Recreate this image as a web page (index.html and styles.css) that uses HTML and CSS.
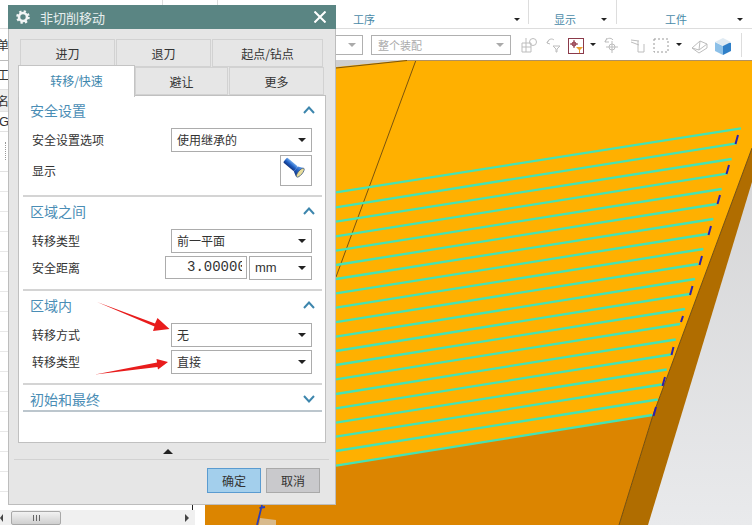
FILE: index.html
```html
<!DOCTYPE html>
<html lang="zh-CN">
<head>
    <meta charset="UTF-8">
    <title>非切削移动</title>
    <link rel="stylesheet" href="styles.css">
</head>
<body>
<div class="app">

    <div class="ribbon">
        <div class="group g1"></div>
        <div class="group g2"></div>
        <div class="group g3"><span class="group-name">工序</span><i class="caret"></i></div>
        <div class="group g4"><span class="group-name">显示</span><i class="caret"></i></div>
        <div class="group g5"><span class="group-name">工件</span><i class="caret"></i></div>
    </div>

    <div class="toolbar">
        <div class="crumb">单(</div>
        <div class="combo combo-a"><i class="caret caret-grey"></i></div>
        <div class="combo combo-b"><span>整个装配</span><i class="caret caret-grey"></i></div>
        <svg class="tool-icons" width="230" height="24" viewBox="515 33 230 24">
            <!-- grey icons -->
            <g fill="none" stroke="#bdbdbd">
                <path d="M522 43h9v9h-9zM526 38v14M522 47h9"/>
                <circle cx="533" cy="42" r="3.500"/>
                <path d="M547 43c1-4 5-5 7-3M549 40l-2 3 3 1"/>
                <path d="M553 46h7l-3 3v3h-1v-3z"/>
                <path d="M605 42c1-4 6-5 8-2M607 38l-2 4 4 0"/>
                <circle cx="612" cy="47" r="3"/>
                <path d="M612 41v12M606 47h12"/>
                <path d="M631 40l8 1M631 42l8 3M638 41v11h6v-8"/>
                <rect x="654" y="39" width="14" height="13" stroke-dasharray="2 2" stroke="#999"/>
                <path d="M692 48l8-7 7 3v4l-8 5z M700 41l-1 9 M692 48l7 2 8-6"/>
            </g>
            <!-- active filter icon -->
            <rect x="568.500" y="38.500" width="15" height="15" fill="#fff" stroke="#8b3a4a"/>
            <path d="M574 40v8M570 44h8" stroke="#8b2a3a"/>
            <circle cx="574" cy="44" r="2" fill="none" stroke="#8b2a3a"/>
            <path d="M576 47h7l-3 3v3h-1v-3z" fill="#eba030"/>
            <path d="M590 43h6l-3 3zM676 43h6l-3 3z" fill="#222"/>
            <!-- blue cube -->
            <path d="M723 40l8 3v8l-8 4z" fill="#2f7fc8"/>
            <path d="M715 42l8 4v9l-8-4z" fill="#8cc0e8"/>
            <path d="M715 42l8-4 8 4-8 4z" fill="#dfeaf2"/>
            <path d="M741.500 33v25" stroke="#ddd"/>
        </svg>
    </div>

    <div class="work">
        <div class="side">
            <div class="side-row row-tool">工</div>
            <div class="side-row row-head">名</div>
            <div class="side-row row-ge">GE</div>
            <div class="side-row row-tree"><i class="tree-line"></i></div>
            <div class="side-grid"></div>
            <div class="tick"></div>
            <div class="hscroll">
                <i class="arrow-left"></i>
                <div class="thumb"><span></span></div>
                <i class="arrow-right"></i>
            </div>
        </div>

        <svg class="view" width="547" height="465" viewBox="205 60 547 465">
            <defs>
                <linearGradient id="bg" x1="0" y1="0" x2="0" y2="1">
                    <stop offset="0" stop-color="#cfcfd0"/>
                    <stop offset="1" stop-color="#e9eaec"/>
                </linearGradient>
            </defs>
            <rect x="205" y="60" width="547" height="465" fill="url(#bg)"/>
            <path d="M205 80L407 60H752V148L653 415L619 525H205Z" fill="#ffb000"/>
            <path d="M205 487L653 415L619 525H205Z" fill="#dc8500"/>
            <path d="M752 148V182L648 525H619L653 415Z" fill="#b06d00"/>
            <path d="M336 68L407 60.500M416 60L336 277M752 148L653 415L619 525" fill="none" stroke="#6b4a10" stroke-width="0.900"/>
            <path d="M407 60.500H752" stroke="#b09060"/>
            <!-- tool path passes -->
            <path fill="none" stroke="#45e3b4" stroke-width="2.300" d="M336 192.300L741 128.300M336 207.300L736.500 143.400M336 221.700L731.700 159M336 236.300L726.700 173.600M336 250.700L721.700 189M336 265L716.700 204M336 279L713.300 219M336 293.300L707.700 234M336 307.700L703.300 249M336 322.200L698.300 264M336 336.700L695 279M336 351L690 294M336 365L685 309M336 379.300L680 324M336 394L675.700 339.500M336 408.300L671 354.500M336 422.700L666.700 369.500M336 436.700L661.700 384.500M336 451L657.700 399.500M336 465.700L652.300 415"/>
            <path fill="none" stroke="#2a1fb0" stroke-width="2" d="M738 135L735.500 144M729 165L726.500 174M720 195L717.500 204M711 226L708.500 235M702 256L699.500 265M692.500 286L690 295M683 316L681 322M673.500 347L671.500 355M665 377L662.500 386M656 407L653.500 416"/>
            <!-- part of the tool at the bottom -->
            <path d="M260 518L276 520V525H259Z" fill="#d8ba8c"/>
            <path d="M262 505L257 525M259.500 508L265 507" fill="none" stroke="#2b3fb8" stroke-width="1.800"/>
        </svg>
    </div>

    <div class="dialog">
        <div class="title-bar">
            <svg class="gear" width="16" height="16" viewBox="0 0 16 16">
                <circle cx="8" cy="8" r="5.500" fill="none" stroke="#f2f5f5" stroke-width="2.600" stroke-dasharray="2.200 2.120"/>
                <circle cx="8" cy="8" r="4" fill="none" stroke="#f2f5f5" stroke-width="2.600"/>
            </svg>
            <span class="title-text">非切削移动</span>
            <svg class="close" width="12" height="12" viewBox="0 0 12 12">
                <path d="M0.500 0.500L11.500 11.500M11.500 0.500L0.500 11.500" stroke="#fff" stroke-width="2"/>
            </svg>
        </div>

        <div class="tabs">
            <div class="tab-row">
                <div class="tab w95">进刀</div>
                <div class="tab w95">退刀</div>
                <div class="tab w111">起点/钻点</div>
            </div>
            <div class="tab-row">
                <div class="tab tab-active">转移/快速</div>
                <div class="tab w93">避让</div>
                <div class="tab w95">更多</div>
            </div>
        </div>

        <div class="panel">
            <div class="section">
                <div class="section-head">
                    <span>安全设置</span>
                    <svg class="chevron" width="12" height="8" viewBox="0 0 12 8"><path d="M1 7L6 1.500L11 7" fill="none" stroke="#3d86ad" stroke-width="2"/></svg>
                </div>
                <div class="row">
                    <label>安全设置选项</label>
                    <div class="select"><span>使用继承的</span><i class="caret"></i></div>
                </div>
                <div class="row">
                    <label>显示</label>
                    <div class="icon-btn">
                        <svg width="28" height="28" viewBox="0 0 24 24">
                            <defs>
                                <linearGradient id="torch" x1="0" y1="0" x2="0" y2="1">
                                    <stop offset="0" stop-color="#6ea8ec"/>
                                    <stop offset="0.500" stop-color="#1f5fc4"/>
                                    <stop offset="1" stop-color="#12327c"/>
                                </linearGradient>
                            </defs>
                            <g transform="rotate(40 12 10)">
                                <rect x="0" y="7.500" width="12" height="5.500" rx="1" fill="url(#torch)"/>
                                <path d="M12 7.500L16 5.500V15L12 13Z" fill="url(#torch)"/>
                                <ellipse cx="17" cy="10.250" rx="1.800" ry="4.800" fill="#e8dc9a" stroke="#33507a" stroke-width="0.600"/>
                            </g>
                        </svg>
                    </div>
                </div>
            </div>

            <div class="section">
                <div class="section-head">
                    <span>区域之间</span>
                    <svg class="chevron" width="12" height="8" viewBox="0 0 12 8"><path d="M1 7L6 1.500L11 7" fill="none" stroke="#3d86ad" stroke-width="2"/></svg>
                </div>
                <div class="row">
                    <label>转移类型</label>
                    <div class="select"><span>前一平面</span><i class="caret"></i></div>
                </div>
                <div class="row">
                    <label>安全距离</label>
                    <div class="distance">
                        <div class="number"><span>3.00000</span></div>
                        <div class="select select-unit"><span>mm</span><i class="caret"></i></div>
                    </div>
                </div>
            </div>

            <div class="section">
                <div class="section-head">
                    <span>区域内</span>
                    <svg class="chevron" width="12" height="8" viewBox="0 0 12 8"><path d="M1 7L6 1.500L11 7" fill="none" stroke="#3d86ad" stroke-width="2"/></svg>
                </div>
                <div class="row">
                    <label>转移方式</label>
                    <div class="select"><span>无</span><i class="caret"></i></div>
                </div>
                <div class="row">
                    <label>转移类型</label>
                    <div class="select"><span>直接</span><i class="caret"></i></div>
                </div>
            </div>

            <div class="section section-closed">
                <div class="section-head">
                    <span>初始和最终</span>
                    <svg class="chevron" width="12" height="8" viewBox="0 0 12 8"><path d="M1 1L6 6.500L11 1" fill="none" stroke="#3d86ad" stroke-width="2"/></svg>
                </div>
            </div>
        </div>

        <div class="sash"><i></i></div>

        <div class="footer">
            <div class="btn btn-ok">确定</div>
            <div class="btn">取消</div>
        </div>
    </div>

    <!-- annotation arrows drawn on top of the screenshot -->
    <svg class="arrows" width="752" height="525" viewBox="0 0 752 525">
        <path d="M97 302L155 323.500L157.500 318L169.500 329L153 331L154.500 326.500Z" fill="#e81c1c"/>
        <path d="M95 374.500L157 362.500L156.500 359L168 362L158 369.500L157.500 367Z" fill="#e81c1c"/>
    </svg>

</div>
</body>
</html>
```

FILE: styles.css
```css
* {
    box-sizing: border-box;
}
body {
    margin: 0;
    font-family: "Noto Sans CJK SC", "Noto Sans", sans-serif;
    font-size: 12px;
    color: #333;
    background: #fff;
}
.app {
    position: relative;
    width: 752px;
    height: 525px;
    overflow: hidden;
}

/* ribbon */
.ribbon {
    display: flex;
    height: 29px;
    border-bottom: 1px solid #ddd;
}
.group {
    display: flex;
    align-items: center;
    justify-content: space-between;
    height: 24px;
    border-right: 1px solid #ddd;
    padding-top: 14px;
}
.g1 { width: 163px; }
.g2 { width: 55px; }
.g3 { width: 311px; padding-left: 135px; padding-right: 8px; }
.g4 { width: 88px; padding-left: 25px; padding-right: 9px; }
.g5 { flex: 1; padding-left: 48px; padding-right: 9px; border-right: none; }
.group-name {
    font-size: 11px;
    line-height: 14px;
    color: #4a8aa8;
}
.caret {
    display: block;
    width: 0;
    height: 0;
    border-left: 4px solid transparent;
    border-right: 4px solid transparent;
    border-top: 4px solid #222;
}
.group .caret {
    border-left-width: 3px;
    border-right-width: 3px;
    border-top-width: 3px;
}
.caret-grey {
    border-top-color: #aaa;
}

/* toolbar */
.toolbar {
    display: flex;
    align-items: center;
    height: 31px;
}
.crumb {
    width: 300px;
    margin-left: -3px;
    flex-shrink: 0;
}
.combo {
    display: flex;
    align-items: center;
    justify-content: space-between;
    height: 20px;
    padding: 0 6px;
    border: 1px solid #b0b0b0;
    font-size: 11px;
    color: #aaa;
    flex-shrink: 0;
}
.combo-a {
    width: 66px;
    justify-content: flex-end;
}
.combo-b {
    width: 140px;
    margin-left: 8px;
}
.tool-icons {
    display: block;
    margin-left: 4px;
    flex-shrink: 0;
}

/* side list + graphics window */
.work {
    display: flex;
    height: 465px;
}
.side {
    display: flex;
    flex-direction: column;
    width: 205px;
    border-top: 1px solid #bbb;
    overflow: hidden;
}
.side-row {
    margin-left: -3px;
    border-bottom: 1px solid #e2e2e2;
}
.row-tool { height: 29px; line-height: 28px; }
.row-head { height: 22px; line-height: 21px; background: #eee; }
.row-ge { height: 20px; line-height: 19px; margin-left: -1px; font-size: 13px; font-family: "Liberation Sans", sans-serif; }
.row-tree { height: 40px; margin-left: 0; }
.tree-line {
    display: block;
    width: 1px;
    height: 18px;
    margin: 10px 0 0 5px;
    border-left: 1px dotted #999;
}
.side-grid {
    flex: 1;
    background: repeating-linear-gradient(#fff 0, #fff 19px, #e8e8e8 19px, #e8e8e8 20px);
}
.tick {
    width: 1px;
    height: 5px;
    margin-left: 192px;
    background: #222;
    flex-shrink: 0;
}
.hscroll {
    display: flex;
    align-items: center;
    width: 195px;
    height: 15px;
    padding-right: 6px;
    background: #f0f0f0;
    flex-shrink: 0;
}
.arrow-left {
    width: 0;
    height: 0;
    border-top: 4px solid transparent;
    border-bottom: 4px solid transparent;
    border-right: 3px solid #444;
}
.arrow-right {
    width: 0;
    height: 0;
    border-top: 4px solid transparent;
    border-bottom: 4px solid transparent;
    border-left: 4px solid #444;
}
.thumb {
    display: flex;
    align-items: center;
    justify-content: center;
    width: 50px;
    height: 14px;
    margin-left: 8px;
    margin-right: auto;
    border: 1px solid #a8a8a8;
    border-radius: 2px;
    background: linear-gradient(#f2f2f2, #cfcfcf);
}
.thumb span {
    width: 7px;
    height: 6px;
    background: repeating-linear-gradient(90deg, #666 0, #666 1px, transparent 1px, transparent 3px);
}
.view {
    display: block;
    flex-shrink: 0;
}

/* dialog */
.dialog {
    position: absolute;
    left: 8px;
    top: 5px;
    width: 328px;
    height: 500px;
    background: #e6e6e6;
    border: 1px solid #bdbdbd;
    border-top: none;
}
.title-bar {
    display: flex;
    align-items: center;
    height: 24px;
    margin: 0 -1px;
    padding: 0 10px 0 7px;
    background: #5a8583;
    color: #e6eeee;
    font-size: 13px;
}
.gear {
    display: block;
}
.title-text {
    margin-left: 9px;
    flex: 1;
}
.close {
    display: block;
}

/* tabs */
.tabs {
    padding: 10px 0 0 9px;
}
.tab-row {
    display: flex;
    height: 28px;
    padding-left: 2px;
}
.tab {
    display: flex;
    align-items: center;
    justify-content: center;
    height: 28px;
    border: 1px solid #d2d2d2;
    margin-right: 1px;
}
.w95 { width: 95px; }
.w93 { width: 93px; }
.w111 { width: 111px; }
.tab-active {
    position: relative;
    z-index: 1;
    width: 117px;
    height: 32px;
    margin: -2px 0 -2px -2px;
    padding-bottom: 3px;
    background: #fff;
    border: 1px solid #c4c4c4;
    border-bottom: none;
    color: #3d86ad;
}

/* panel */
.panel {
    width: 308px;
    height: 348px;
    margin-left: 9px;
    background: #fff;
    border: 1px solid #c0c0c0;
}
.section {
    margin: 0 3px 0 4px;
    padding: 0 10px 9px 9px;
    border-bottom: 2px solid #d4d4d4;
}
.section-head {
    display: flex;
    align-items: center;
    justify-content: space-between;
    height: 32px;
    margin: 0 -3px 0 -2px;
    padding-bottom: 4px;
    font-size: 14px;
    color: #4a8db5;
}
.chevron {
    display: block;
}
.section-closed {
    padding-bottom: 0;
    border-bottom-color: #bcc6cd;
}
.section-closed .section-head {
    height: 25px;
    padding: 2px 0 0 0;
    margin-left: -2px;
    margin-right: -3px;
}
.row {
    display: flex;
    align-items: center;
    justify-content: space-between;
    margin-top: 3px;
}
.row label {
    padding-bottom: 1px;
}
.section-head + .row {
    margin-top: 0;
}
.select {
    display: flex;
    align-items: center;
    justify-content: space-between;
    width: 141px;
    height: 24px;
    padding: 0 5px 1px;
    background: #fff;
    border: 1px solid #acacac;
}
.icon-btn {
    display: flex;
    align-items: center;
    justify-content: center;
    width: 32px;
    height: 31px;
    border: 1px solid #acacac;
}
.distance {
    display: flex;
    align-items: flex-start;
    gap: 2px;
}
.number {
    display: flex;
    width: 82px;
    height: 23px;
    padding: 0 4px 0 21px;
    border: 1px solid #acacac;
    font-family: "Liberation Mono", monospace;
    font-size: 14px;
    line-height: 21px;
}
.number span {
    display: block;
    overflow: hidden;
    white-space: nowrap;
}
.select-unit {
    width: 63px;
    font-family: "Liberation Sans", sans-serif;
    font-size: 13px;
}

/* bottom of the dialog */
.sash {
    display: flex;
    align-items: center;
    justify-content: center;
    height: 17px;
    margin: 0 6px 0 5px;
    border-bottom: 1px solid #d2d2d2;
}
.sash i {
    display: block;
    width: 0;
    height: 0;
    margin-right: 8px;
    border-left: 5px solid transparent;
    border-right: 5px solid transparent;
    border-bottom: 5px solid #222;
}
.footer {
    display: flex;
    justify-content: flex-end;
    gap: 5px;
    padding: 8px 15px 0 0;
}
.btn {
    display: flex;
    align-items: center;
    justify-content: center;
    width: 54px;
    height: 25px;
    background: #c9c9cc;
    border: 1px solid #a9a9a9;
}
.btn-ok {
    background: #a3cfec;
    border-color: #5a9bd0;
}

.arrows {
    position: absolute;
    left: 0;
    top: 0;
    pointer-events: none;
}
```
